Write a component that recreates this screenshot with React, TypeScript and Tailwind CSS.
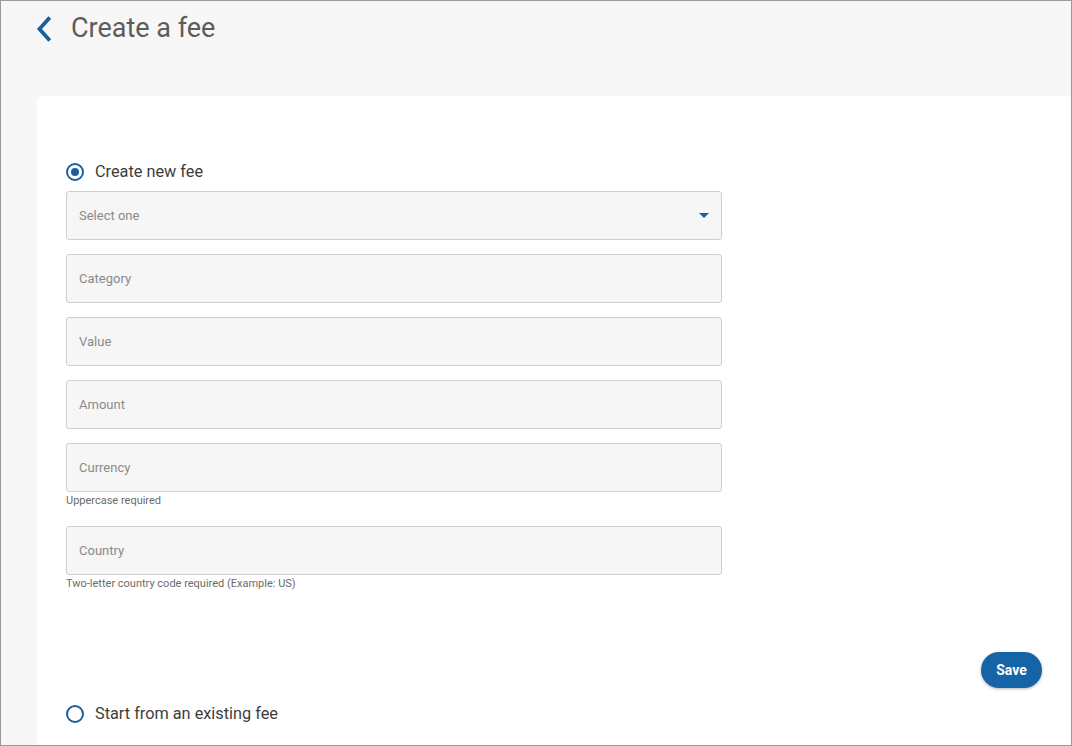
import React, { useState } from "react";

const fields = [
  { label: "Category" },
  { label: "Value" },
  { label: "Amount" },
  { label: "Currency", hint: "Uppercase required" },
  { label: "Country", hint: "Two-letter country code required (Example: US)" },
];

function Radio({ checked }: { checked: boolean }) {
  return (
    <span className="flex h-[18px] w-[18px] items-center justify-center rounded-full border-2 border-[#1d5f9b]">
      {checked && <span className="h-[8px] w-[8px] rounded-full bg-[#1d5f9b]" />}
    </span>
  );
}

export default function App() {
  const [mode, setMode] = useState<"new" | "existing">("new");

  return (
    <div
      className="flex h-[746px] w-[1072px] flex-col overflow-hidden border border-[#9a9a9a] bg-[#f7f7f7]"
      style={{ fontFamily: "Roboto, 'Liberation Sans', sans-serif" }}
    >
      {/* Header */}
      <div className="flex h-[95px] items-start gap-[19px] pl-[35px] pt-[12px]">
        <button className="mt-[3px] text-[#1d5f9b]">
          <svg width="16" height="26" viewBox="0 0 16 26" fill="none">
            <path d="M12.5 3 L3.5 13 L12.5 23" stroke="currentColor" strokeWidth="3.8" strokeLinecap="square" />
          </svg>
        </button>
        <h1 className="text-[27px] leading-[30px] text-[#5c5c5c]">Create a fee</h1>
      </div>

      {/* Card */}
      <div className="ml-[36px] flex flex-1 flex-col rounded-tl-[6px] bg-white pl-[29px] pr-[29px] pt-[64px]">
        <label className="flex h-[24px] cursor-pointer items-center gap-[11px]" onClick={() => setMode("new")}>
          <Radio checked={mode === "new"} />
          <span className="text-[16.3px] text-[#3d3d3d]">Create new fee</span>
        </label>

        <div className="mt-[7px] flex w-[656px] flex-col">
          <div className="flex h-[49px] items-center justify-between rounded-[3px] border border-[#cfcfcf] bg-[#f6f6f6] pl-[12px] pr-[12px]">
            <span className="text-[13px] text-[#8a8a8a]">Select one</span>
            <svg width="10" height="6" viewBox="0 0 10 6">
              <path d="M0 0 H10 L5 5 Z" fill="#1d5f9b" />
            </svg>
          </div>

          {fields.map((f) => (
            <div key={f.label} className="mt-[14px] flex flex-col">
              <div className="flex h-[49px] items-center rounded-[3px] border border-[#cfcfcf] bg-[#f6f6f6] pl-[12px]">
                <span className="text-[13px] text-[#8a8a8a]">{f.label}</span>
              </div>
              {f.hint && (
                <span className="mb-[4px] mt-[2px] text-[11px] leading-[14px] text-[#6b6b6b]">{f.hint}</span>
              )}
            </div>
          ))}
        </div>

        <div className="mt-[57px] flex justify-end">
          <button className="h-[36px] w-[61px] rounded-full bg-[#1564a6] text-[14px] font-bold text-white shadow-[0_1px_3px_rgba(0,0,0,0.3)]">
            Save
          </button>
        </div>

        <label className="mt-[14px] flex h-[24px] cursor-pointer items-center gap-[11px]" onClick={() => setMode("existing")}>
          <Radio checked={mode === "existing"} />
          <span className="text-[16.3px] text-[#3d3d3d]">Start from an existing fee</span>
        </label>
      </div>
    </div>
  );
}
